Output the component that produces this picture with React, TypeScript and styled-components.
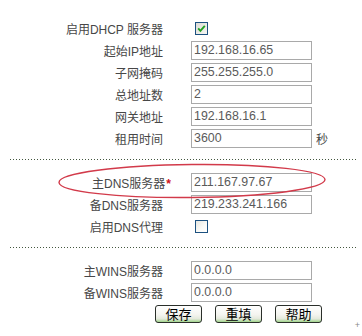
import styled, { createGlobalStyle } from "styled-components";

const GlobalStyle = createGlobalStyle`
  html, body {
    margin: 0;
    padding: 0;
    background: #ffffff;
  }
  body {
    font-family: "Liberation Sans", "Noto Sans CJK SC", sans-serif;
  }
`;

type Field = {
  label: string;
  value?: string;
  check?: boolean;
  checked?: boolean;
  unit?: string;
  required?: boolean;
};

const dhcpFields: Field[] = [
  { label: "启用DHCP 服务器", check: true, checked: true },
  { label: "起始IP地址", value: "192.168.16.65" },
  { label: "子网掩码", value: "255.255.255.0" },
  { label: "总地址数", value: "2" },
  { label: "网关地址", value: "192.168.16.1" },
  { label: "租用时间", value: "3600", unit: "秒" },
];

const dnsFields: Field[] = [
  { label: "主DNS服务器", value: "211.167.97.67", required: true },
  { label: "备DNS服务器", value: "219.233.241.166" },
  { label: "启用DNS代理", check: true, checked: false },
];

const winsFields: Field[] = [
  { label: "主WINS服务器", value: "0.0.0.0" },
  { label: "备WINS服务器", value: "0.0.0.0" },
];

const FormRow = ({ field }: { field: Field }) => (
  <Row>
    <Label>
      {field.label}
      {field.required && <Required>*</Required>}
    </Label>
    {field.check ? (
      <CheckBox $checked={field.checked}>
        {field.checked && (
          <svg width="9" height="9" viewBox="0 0 9 9">
            <path
              d="M1.2 4.4 L3.4 6.8 L7.8 1.8"
              fill="none"
              stroke="#21a121"
              strokeWidth="1.9"
            />
          </svg>
        )}
      </CheckBox>
    ) : (
      <TextInput defaultValue={field.value} />
    )}
    {field.unit && <Unit>{field.unit}</Unit>}
  </Row>
);

const App = () => {
  return (
    <Page>
      <GlobalStyle />
      <Section>
        {dhcpFields.map((f) => (
          <FormRow key={f.label} field={f} />
        ))}
      </Section>
      <Divider />
      <Section>
        {dnsFields.map((f) => (
          <FormRow key={f.label} field={f} />
        ))}
      </Section>
      <Divider />
      <Section>
        {winsFields.map((f) => (
          <FormRow key={f.label} field={f} />
        ))}
      </Section>
      <Buttons>
        <Button>保存</Button>
        <Button>重填</Button>
        <Button>帮助</Button>
      </Buttons>

      {/* hand drawn highlight around the primary dns row */}
      <Highlight width="276" height="42" viewBox="0 0 276 42">
        <ellipse
          cx="137"
          cy="21"
          rx="133"
          ry="16.5"
          fill="none"
          stroke="#d23a4a"
          strokeWidth="1.4"
          transform="rotate(-0.6 137 21)"
        />
      </Highlight>
      <Corner>+</Corner>
    </Page>
  );
};

const Page = styled.div`
  position: relative;
  width: 362px;
  height: 336px;
  padding-top: 17px;
  box-sizing: border-box;
  overflow: hidden;
`;

const Section = styled.div`
  display: flex;
  flex-direction: column;
`;

const Row = styled.div`
  display: flex;
  align-items: center;
  height: 22px;
`;

const Label = styled.div`
  width: 163px;
  flex: none;
  text-align: right;
  font-size: 12px;
  color: #474747;
  white-space: nowrap;
`;

const Required = styled.span`
  color: #d01020;
  font-weight: bold;
  margin-right: -8px;
  margin-left: 1px;
`;

const TextInput = styled.input`
  margin-left: 28px;
  width: 121px;
  height: 19px;
  box-sizing: border-box;
  border: 1px solid #a9a9a9;
  padding: 0 0 0 2px;
  font-family: "Liberation Sans", sans-serif;
  font-size: 12.4px;
  color: #5a5a5a;
  background: #fff;
  outline: none;
`;

const CheckBox = styled.div<{ $checked?: boolean }>`
  margin-left: 32px;
  width: 13px;
  height: 13px;
  box-sizing: border-box;
  border: 1px solid #1c5180;
  background: ${(p) =>
    p.$checked
      ? "linear-gradient(135deg, #dcdcd6 0%, #f6f6f2 100%)"
      : "linear-gradient(135deg, #e6e6e0 0%, #fbfbf8 60%, #ffffff 100%)"};
  display: flex;
  align-items: center;
  justify-content: center;
`;

const Unit = styled.span`
  margin-left: 4px;
  font-size: 12px;
  color: #474747;
`;

const Divider = styled.div`
  margin: 10px 5px 11px 10px;
  height: 1px;
  background-image: linear-gradient(to right, #44573f 1px, transparent 1px);
  background-size: 3px 1px;
`;

const Buttons = styled.div`
  display: flex;
  gap: 13px;
  padding-left: 155px;
  margin-top: 2px;
`;

const Button = styled.button`
  width: 47px;
  height: 18px;
  box-sizing: border-box;
  padding: 0;
  border: 1px solid #2a2f2a;
  border-radius: 3px;
  background: linear-gradient(
    to bottom,
    #ffffff 0%,
    #f4f4ef 55%,
    #e4e9dc 80%,
    #9fd38a 100%
  );
  font-family: "Noto Sans CJK SC", sans-serif;
  font-size: 13px;
  line-height: 16px;
  color: #000;
`;

const Highlight = styled.svg`
  position: absolute;
  left: 55px;
  top: 160px;
  pointer-events: none;
`;

const Corner = styled.span`
  position: absolute;
  right: 2px;
  bottom: 6px;
  font-size: 9px;
  line-height: 9px;
  color: #8a8a8a;
  font-family: "Liberation Sans", sans-serif;
`;

export default App;
